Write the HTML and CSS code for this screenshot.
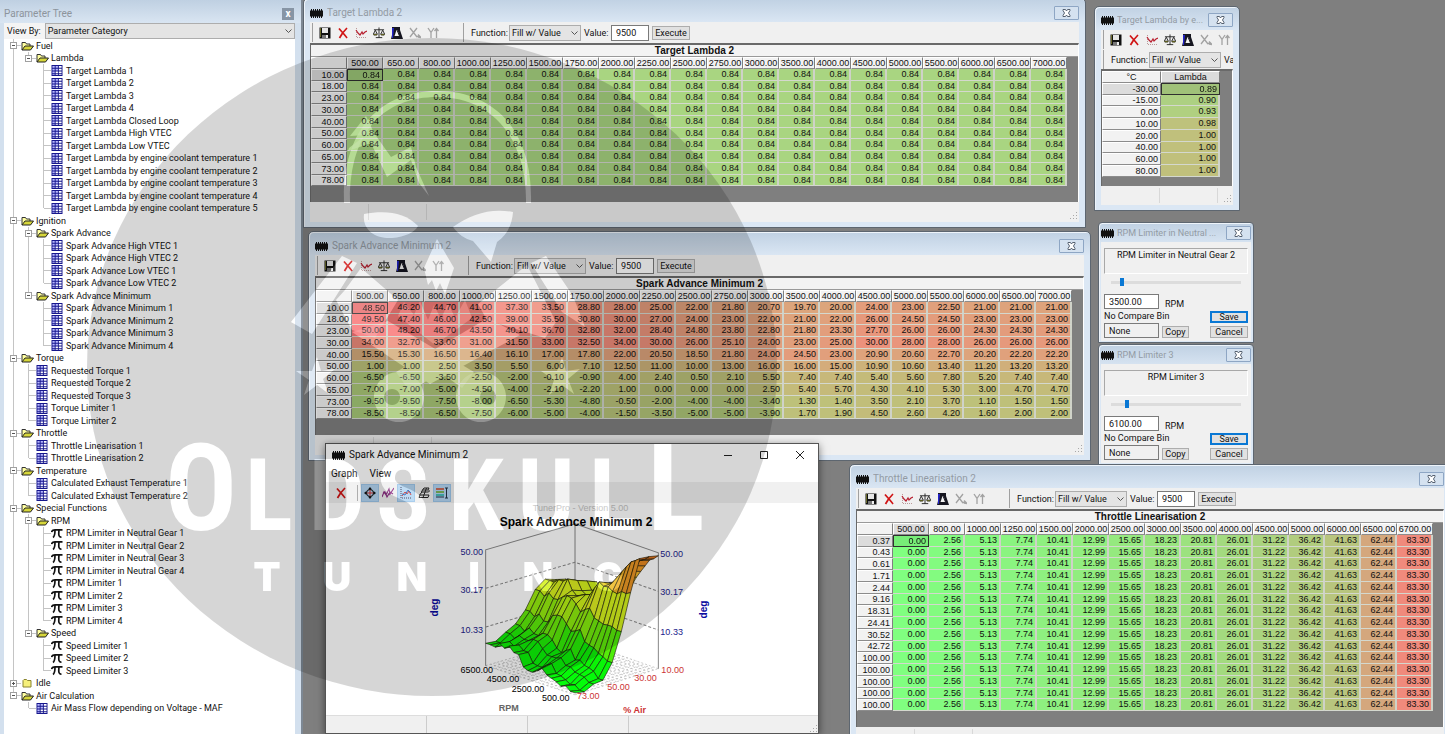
FILE: index.html
```html
<!DOCTYPE html>
<html lang="en">
<head>
<meta charset="utf-8">
<title>TunerPro</title>
<link rel="stylesheet" href="styles.css">
</head>
<body>
<svg class="defs" aria-hidden="true">
  <symbol id="i-chip" viewBox="0 0 13 9"><path d="M1 0h1v9H1zM3 0h1v9H3zM5 0h1v9H5zM7 0h1v9H7zM9 0h1v9H9zM11 0h1v9h-1z" fill="#111"/><path d="M0 1.500h13v6H0z" fill="#111"/></symbol>
  <symbol id="i-close" viewBox="0 0 9 8"><path d="M1 .500h2.500l1 1.500 1-1.500H8v1L6.500 4 8 6.500v1H5.500l-1-1.500-1 1.500H1v-1L2.500 4 1 1.500z" fill="#fff" stroke="#566170"/></symbol>
  <symbol id="i-save" viewBox="0 0 12 12"><path d="M.500.500h11v11h-11z" fill="#111"/><path d="M3 1h6v5H3z" fill="#e6e6e6"/><path d="M3 8h6v3H3z" fill="#777"/><path d="M7 8h2v3H7z" fill="#eee"/><path d="M1 1h1v9H1z" fill="#6b6b2a"/></symbol>
  <symbol id="i-x" viewBox="0 0 12 12"><path d="M2 1.500C4 4 8 8 10 11M10 1C7 4 4 8 2.500 11" stroke="#d01414" stroke-width="1.700" fill="none"/></symbol>
  <symbol id="i-plot" viewBox="0 0 12 12"><path d="M1.500 1v9.500H12" fill="none" stroke="#b99" stroke-dasharray="1 1"/><path d="M1 3l2 3 2 2 2-3 1 2 2-2 2-1" fill="none" stroke="#b82030" stroke-width="1.200"/></symbol>
  <symbol id="i-scale" viewBox="0 0 13 12"><path d="M6.500 0v11M3 11h7M1 2.500h11M2.500 3L.500 7M2.500 3l2 4M10.500 3l-2 4M10.500 3l2 4" stroke="#222" fill="none"/><path d="M0 7h5L4 8.500H1zM8 7h5l-1 1.500H9z" fill="#7a7a22" stroke="#222" stroke-width=".500"/></symbol>
  <symbol id="i-metro" viewBox="0 0 12 12"><path d="M1 0h8v3l3 9H0l1-4z" fill="#15151f"/><path d="M1 1h2L2 11H1z" fill="#2222c8"/><path d="M5.500 3h1l2 6H3.500z" fill="#f2f2f2"/><path d="M6 3l2.500 6" stroke="#15151f"/></symbol>
  <symbol id="i-xa" viewBox="0 0 12 12"><path d="M1 1l7 9M8 1L1 10M7 9.500h4M9 7.500l3 3-3-.500" stroke="#a2a2a2" stroke-width="1.300" fill="none"/></symbol>
  <symbol id="i-ya" viewBox="0 0 12 12"><path d="M1 1l3 4.500V11M7 1L4 5.500M9.500 11V2M7.500 4l2-2.500 2 2.500" stroke="#a2a2a2" stroke-width="1.300" fill="none"/></symbol>
  <symbol id="i-chev" viewBox="0 0 7 4"><path d="M.500.500l3 3 3-3" fill="none" stroke="#555"/></symbol>
  <symbol id="i-open" viewBox="0 0 13 10"><path d="M1 9V1.500h3.500l1 1.500H9v2" fill="#ffffa0" stroke="#333"/><path d="M1 9l3-4h8.500L9.500 9z" fill="#d6d63a" stroke="#222"/></symbol>
  <symbol id="i-shut" viewBox="0 0 13 10"><path d="M2 9V2.500l1-1h2.500l1 1H10V9z" fill="#f6f07a" stroke="#8a8430"/></symbol>
  <symbol id="i-grid" viewBox="0 0 12 12"><path d="M0 0h12v12H0z" fill="#16168c"/><path d="M1 1h2.500v2H1zM4.500 1H7v2H4.500zM1 4h2.500v2H1zM4.500 4H7v2H4.500zM1 7h2.500v2H1zM1 10h2.500v1H1z" fill="#b8b8ff"/><path d="M8 1h3v2H8zM8 4h3v2H8zM4.500 7H7v2H4.500zM8 7h3v2H8zM4.500 10H7v1H4.500zM8 10h3v1H8z" fill="#fff"/></symbol>
  <symbol id="i-pi" viewBox="0 0 12 10"><path d="M.500 3.500C1 1.500 2 1.300 4 1.300h7.500M4 1.500C4 5 3.500 8 2 9M8 1.500C7.500 6 7.500 9 10.500 8.500" fill="none" stroke="#111" stroke-width="1.700"/></symbol>
  <symbol id="i-grip" viewBox="0 0 8 8"><path d="M6 0h1v1H6zM6 3h1v1H6zM3 3h1v1H3zM0 6h1v1H0zM3 6h1v1H3zM6 6h1v1H6z" fill="#a8a8a8"/></symbol>
  <symbol id="i-cross" viewBox="0 0 12 12"><path d="M6 0l2 2.500H4zM6 12l2-2.500H4zM0 6l2.500-2v4zM12 6L9.500 4v4z" fill="#111"/><circle cx="6" cy="6" r="3.500" fill="none" stroke="#111"/><path d="M6 3v6M3 6h6" stroke="#c33"/></symbol>
  <symbol id="i-wave" viewBox="0 0 12 12"><path d="M0 10l2-5 2 3 3-6 1 5 4-6M1 6l2-1 2 5 3-5 3 2" fill="none" stroke="#8a2a80" stroke-width="1.100"/></symbol>
  <symbol id="i-trace" viewBox="0 0 12 12"><path d="M1 0v11h11" fill="none" stroke="#335" stroke-dasharray="1 1"/><path d="M2 9l3-4 2 2 2-3 2 4" fill="none" stroke="#c33"/><path d="M2 7l3 1 3-5 3 3" fill="none" stroke="#26b"/></symbol>
  <symbol id="i-mesh" viewBox="0 0 12 12"><path d="M6 1h5L10 3H4.500zM3.500 5h7M1.500 8L4 5M1 10.500h9L11 8H2zM8.500 1L5 10.500M4.500 3L3.500 5M11 3v2" fill="none" stroke="#222"/></symbol>
  <symbol id="i-bands" viewBox="0 0 12 12"><path d="M0 1h8v2H0z" fill="#c86a5a"/><path d="M0 4h8v2H0z" fill="#7cb45a"/><path d="M0 7h8v2H0z" fill="#4bb"/><path d="M0 10h8M10.500 1v10M9 1h3M9 11h3" stroke="#234" fill="none"/></symbol>
</svg>

<aside class="panel">
  <header class="panel-title"><h2>Parameter Tree</h2><button class="panel-x" aria-label="Close panel">x</button></header>
  <div class="panel-body">
    <div class="viewby"><label for="view">View By:</label>
      <span class="pick pick-wide"><select id="view"><option>Parameter Category</option></select><svg><use href="#i-chev"/></svg></span></div>
    <ul class="tree" id="tree"></ul>
  </div>
</aside>

<main class="desktop">
  <section class="win w-lambda" data-title="Target Lambda 2" data-grid="lambda"></section>
  <section class="win w-spark" data-title="Spark Advance Minimum 2" data-grid="spark"></section>
  <section class="win w-coolant" data-title="Target Lambda by e..." data-grid="coolant"></section>
  <section class="win w-throttle" data-title="Throttle Linearisation 2" data-grid="throttle"></section>
  <section class="win w-rpm2" data-title="RPM Limiter in Neutral ..." data-limit="RPM Limiter in Neutral Gear 2" data-value="3500.00" data-pos="9"></section>
  <section class="win w-rpm3" data-title="RPM Limiter 3" data-limit="RPM Limiter 3" data-value="6100.00" data-pos="13"></section>

  <section class="graph">
    <header class="graph-title"><svg class="chip"><use href="#i-chip"/></svg><h2>Spark Advance Minimum 2</h2>
      <button aria-label="Minimize"><svg viewBox="0 0 10 10"><path d="M1 5.500h8" stroke="#222"/></svg></button>
      <button aria-label="Maximize"><svg viewBox="0 0 10 10"><path d="M1.500 1.500h7v7h-7z" fill="none" stroke="#222"/></svg></button>
      <button aria-label="Close"><svg viewBox="0 0 10 10"><path d="M1 1l8 8M9 1L1 9" fill="none" stroke="#222"/></svg></button>
    </header>
    <nav class="menu"><button>Graph</button><button>View</button></nav>
    <div class="graph-tools">
      <button aria-label="Close graph"><svg><use href="#i-x"/></svg></button><i></i>
      <button class="on" aria-label="Crosshair"><svg><use href="#i-cross"/></svg></button>
      <button aria-label="Wave"><svg><use href="#i-wave"/></svg></button>
      <button class="on" aria-label="Trace"><svg><use href="#i-trace"/></svg></button>
      <button aria-label="Mesh"><svg><use href="#i-mesh"/></svg></button>
      <button class="on" aria-label="Color bands"><svg><use href="#i-bands"/></svg></button>
    </div>
    <svg class="plot" id="plot" viewBox="0 0 490 211" role="img" aria-label="Spark advance surface"></svg>
    <footer class="graph-status"><span></span><span></span><span></span><span></span><svg class="grip"><use href="#i-grip"/></svg></footer>
  </section>
</main>

<svg class="emblem" viewBox="0 0 780 734" aria-hidden="true">
  <defs>
    <g id="art">
      <path d="M344 203C342 130 380 91 437 91S533 130 531 203H526C527 138 492 97 437 97C385 97 349 130 350 203Z"/>
      <path d="M350 136L366 116L374 133L391 157L411 147L416 167L429 196L419 183L411 160L387 177L371 143L348 151L349 148L366 135Z"/>
      <path d="M364 214C362 232 378 239 392 238C405 237 415 232 418 226C405 212 385 210 364 214Z"/>
      <path d="M513 212C490 208 472 214 453 227C458 234 465 239 473 241L491 262L497 242C506 236 512 226 513 212Z"/>
      <path d="M437 239L424 268L428 285L432 280L436 291L440 283L445 294L454 268Z"/>
      <path d="M342 256L357 263L312 334L291 322ZM361 268L398 300L375 338L352 330L336 300L345 290Z"/>
      <path d="M546 256L531 263L562 312L585 327L573 296ZM527 265L478 304L487 320L545 338L556 322Z"/>
      <path d="M352 332L388 321L474 372L462 388L440 372L410 392L396 372L488 318L520 335L430 384Z"/>
      <path d="M404 302L414 315L420 301L428 320L434 305L441 319L448 303L455 318L465 300L472 318L435 345L398 316Z" opacity=".6"/>
      <path fill-rule="evenodd" d="M399 372A25 25 0 1 1 398.900 372ZM392 389A8 8 0 1 0 392.100 389ZM481 372A25 25 0 1 1 480.900 372ZM488 389A8 8 0 1 0 488.100 389Z"/>
      <path d="M317 357L321 371L335 369L323 379L329 394L317 385L304 395L309 380L296 371L312 371ZM562 357L566 371L580 369L568 379L574 394L562 385L549 395L554 380L541 371L557 371Z"/>
      <g class="brand"><text x="201" y="530" class="tall">O</text><text y="530" x="269">L</text><text y="530" x="337">D</text><text y="530" x="403">S</text><text y="530" x="476">K</text><text y="530" x="546">U</text><text y="530" x="613">L</text><text x="676" y="530" class="tall">L</text></g>
      <g class="sub"><text y="591" x="267">T</text><text y="591" x="337">U</text><text y="591" x="412">N</text><text y="591" x="474">I</text><text y="591" x="538">N</text><text y="591" x="608">G</text></g>
    </g>
    <mask id="cut" maskUnits="userSpaceOnUse" x="0" y="0" width="780" height="734"><rect width="780" height="734" fill="#fff"/><use href="#art" fill="#000"/></mask>
  </defs>
  <ellipse cx="432" cy="367" rx="345" ry="329" fill="#000" fill-opacity=".16" mask="url(#cut)"/>
  <use href="#art" fill="#fff" fill-opacity=".15"/>
</svg>
<script src="app.js"></script>
</body>
</html>
```
FILE: styles.css
```css
* { box-sizing: border-box; }
body { margin: 0; height: 100vh; overflow: hidden; display: flex; position: relative; background: #7f7f7f; color: #111; font: 9px/12px Roboto, "Liberation Sans", sans-serif; }
h2, ul, dl { margin: 0; padding: 0; font: inherit; }
button, input, select { font: inherit; color: inherit; margin: 0; padding: 0; border-radius: 0; }
.defs { position: absolute; width: 0; height: 0; }

/* parameter tree */
.panel { width: 303px; flex: none; padding: 0 6px 0 4px; background: #d3e0ee; border-right: 2px solid #7d8894; display: flex; flex-direction: column; }
.panel-title { height: 23px; flex: none; margin: 0 -6px 0 -4px; padding: 4px 7px 0 4px; display: flex; justify-content: space-between; align-items: center; color: #8d949c; font-size: 10px; background: linear-gradient(#bfd0e2, #d9e5f2); }
.panel-x { width: 12px; height: 12px; border: 0; background: #8795a5; color: #fff; line-height: 10px; font-weight: bold; }
.panel-body { flex: 1; background: #fff; }
.viewby { display: flex; align-items: center; gap: 4px; height: 16px; padding-left: 3px; background: #f4f4f4; }
.pick { position: relative; display: inline-flex; width: 72px; height: 16px; }
.pick-wide { flex: 1; width: auto; }
.pick select { width: 100%; appearance: none; border: 1px solid #adadad; background: #e4e4e4; padding-left: 2px; line-height: 12px; }
.pick svg { position: absolute; right: 3px; top: 6px; width: 7px; height: 4px; }
.tree { list-style: none; padding-left: 2px; }
.tree li { display: flex; align-items: center; height: 13px; white-space: pre; }
.tree li:nth-child(even) { height: 12px; }
.tree i { width: 15px; height: 100%; position: relative; flex: none; }
.tree .line::before, .tree .tee::before, .tree .end::before { content: ""; position: absolute; left: 7px; top: 0; bottom: 0; border-left: 1px solid #c4c4c4; }
.tree .end::before { bottom: 6px; }
.tree .tee::after, .tree .end::after { content: ""; position: absolute; left: 8px; right: 0; top: 6px; border-top: 1px solid #c4c4c4; }
.tree .box { position: absolute; z-index: 1; left: 4px; top: 3px; width: 7px; height: 7px; border: 1px solid #a0a0a0; background: linear-gradient(#555, #555) center / 3px 1px no-repeat #fff; }
.tree .plus { background: linear-gradient(#555, #555) center / 3px 1px no-repeat, linear-gradient(#555, #555) center / 1px 3px no-repeat #fff; }
.tree svg { width: 12px; height: 11px; margin-right: 3px; flex: none; }
.tree .dir svg { width: 13px; height: 10px; margin-right: 2px; }

/* windows */
.desktop { flex: 1; min-width: 0; }
.win { position: absolute; background: linear-gradient(#c0d1e3, #dbe7f4 24px); border: 1px solid #5d6670; border-radius: 5px 5px 0 0; padding: 0 6px 5px; box-shadow: inset 1px 1px #eef4fa; }
.w-lambda { left: 303px; top: -2px; width: 783px; }
.w-spark { left: 308px; top: 231px; width: 783px; }
.w-coolant { left: 1094px; top: 6px; width: 146px; }
.w-throttle { left: 849px; top: 464px; width: 602px; }
.w-rpm2 { left: 1098px; top: 222px; width: 156px; }
.w-rpm3 { left: 1098px; top: 344px; width: 156px; }
.bar { display: flex; align-items: center; gap: 4px; height: 23px; padding-top: 5px; color: #939ba4; font-size: 10px; white-space: nowrap; }
.bar h2 { flex: 1; overflow: hidden; }
.chip { width: 13px; height: 9px; flex: none; }
.shut { width: 25px; height: 14px; border: 1px solid #8ea6c4; border-radius: 1px; background: #d5e2f0; display: flex; align-items: center; justify-content: center; flex: none; }
.shut svg { width: 9px; height: 8px; }
.client { background: #f0f0f0; }
.tools { display: flex; height: 21px; align-items: center; padding-left: 2px; overflow: hidden; }
.group { display: flex; align-items: center; height: 19px; border-left: 1px solid #a0a0a0; flex: none; }
.icons { padding-left: 3px; width: 151px; }
.icons button { width: 18px; height: 18px; border: 0; background: none; display: flex; align-items: center; justify-content: center; }
.icons svg, .graph-tools svg { width: 12px; height: 12px; }
.fn { padding-left: 7px; gap: 3px; white-space: nowrap; }
.fn label { width: 35px; }
.fn .val { width: 24px; }
.fn input { width: 38px; height: 16px; border: 1px solid #7a7a7a; background: #fff; padding-left: 4px; }
.fn button { width: 38px; height: 14px; border: 1px solid #adadad; background: #e1e1e1; line-height: 12px; }
.sheet { background: #7f7f7f; border-top: 2px solid #696969; border-left: 1px solid #696969; border-right: 1px solid #fff; padding-bottom: 16px; font: 9px/10px "Liberation Sans", sans-serif; overflow: hidden; }
.sheet h3 { margin: 0; height: 12px; background: #f3f3f3; border-bottom: 1px solid #999; text-align: center; font: bold 10px/12px "Liberation Sans", sans-serif; }
table { border-collapse: separate; border-spacing: 0; table-layout: fixed; width: 0; }
td, th { width: 36px; height: 12px; padding: 0 2px 0 0; text-align: right; font-weight: normal; line-height: 9px; border-right: 2px solid #cfd2c8; border-bottom: 1px solid #d4d8ce; white-space: nowrap; }
tbody tr:nth-child(4n+2) > * { height: 11px; }
th { background: #f2f2f2; border-right: 1px solid #808080; border-bottom: 1px solid #8c8c8c; border-left: 1px solid #fff; border-top: 1px solid #fff; }
thead th { text-align: center; padding: 0; }
.sel th, .selcol { background: #dcdcdc; }
.cursor { border: 1px solid #333; filter: brightness(.93); }
.status { display: flex; height: 20px; padding: 2px 1px; align-items: flex-end; }
.status span { width: 58px; height: 100%; border-right: 1px solid #d8d8d8; }
.grip { width: 8px; height: 8px; margin-left: auto; }

/* narrow coolant window */
.w-coolant .bar { padding-top: 3px; }
.w-coolant .bar, .w-rpm2 .bar, .w-rpm3 .bar { gap: 3px; font-size: 9px; }
.w-rpm2 .bar, .w-rpm3 .bar { height: 18px; padding: 0; }
.w-coolant .tools { flex-wrap: wrap; height: 39px; align-content: flex-start; }
.w-coolant .icons { width: 100%; }
.w-coolant .group { margin-bottom: 1px; }
.w-coolant h3, .w-coolant .fn input, .w-coolant .fn button { display: none; }
.w-coolant td, .w-coolant th { width: 59px; }
.w-coolant .sheet { padding-bottom: 9px; }
.w-coolant .status { height: 19px; }

/* limiter dialogs */
.w-rpm2, .w-rpm3 { padding: 1px 2px 1px; border-radius: 4px 4px 0 0; }
.limit { display: flex; flex-direction: column; background: #f0f0f0; padding: 6px 3px 3px; }
.limit h3 { margin: 0; height: 26px; font: inherit; text-align: center; border: 1px solid #a8a8a8; border-right-color: #fff; border-bottom-color: #fff; }
.limit input[type=range] { appearance: none; width: 130px; height: 8px; margin: 4px auto 7px; background: linear-gradient(#dcdcdc, #dcdcdc) center / 100% 3px no-repeat; }
.limit input[type=range]::-webkit-slider-thumb { appearance: none; width: 4px; height: 8px; background: #0a78d4; }
.fields { display: grid; grid-template-columns: 55px 1fr 38px; gap: 0 3px; align-items: center; }
.fields input { width: 55px; height: 15px; border: 1px solid #7a7a7a; background: #fff; padding-left: 4px; }
.fields .none { background: #f0f0f0; }
.fields .cmp { grid-column: span 2; height: 13px; }
.fields .unit { grid-column: span 2; padding: 5px 0 0 3px; }
.fields button { width: 27px; height: 12px; border: 1px solid #adadad; background: #e1e1e1; line-height: 10px; align-self: end; }
.fields .wide { width: 38px; }
.fields .save { border: 2px solid #0a78d4; line-height: 8px; align-self: center; }

/* graph window */
.graph { position: absolute; left: 325px; top: 443px; width: 494px; background: #fff; border: 1px solid #555; box-shadow: 0 2px 8px rgba(0, 0, 0, .5); }
.graph-title { display: flex; align-items: center; height: 22px; padding-left: 6px; font-size: 10px; }
.graph-title h2 { flex: 1; padding-left: 4px; }
.graph-title button { width: 36px; height: 20px; border: 0; background: none; }
.graph-title svg:not(.chip) { width: 10px; height: 10px; vertical-align: middle; }
.menu { height: 16px; display: flex; gap: 12px; padding: 1px 5px; font-size: 10px; }
.menu button { border: 0; background: none; }
.graph-tools { display: flex; height: 21px; align-items: center; background: #f0f0f0; padding-left: 6px; }
.graph-tools button { width: 18px; height: 18px; border: 0; background: none; display: flex; align-items: center; justify-content: center; }
.graph-tools .on { background: #b4d6f2; border: 1px solid #9cc6ea; }
.graph-tools i { height: 16px; margin: 0 3px 0 7px; border-left: 1px solid #a0a0a0; }
.plot { display: block; width: 100%; font: 9px "Liberation Sans", sans-serif; }
.plot .title { font-size: 12px; font-weight: bold; }
.plot .ver { fill: #c4c4c4; }
.plot .blue { fill: #22228c; }
.plot .red { fill: #c33; }
.plot .axis { font-weight: bold; }
.plot .axis.blue { font-size: 10px; fill: #0a0aa0; }
.plot .frame { fill: none; stroke: #888; }
.plot .dash { fill: none; stroke: #888; stroke-dasharray: 3 2; }
.plot .floor { stroke: #999; stroke-width: .5; stroke-dasharray: 2 2; }
.plot .face { stroke: #171708; stroke-width: .6; stroke-linejoin: round; }
.graph-status { display: flex; height: 18px; background: #f0f0f0; border-top: 1px solid #ddd; align-items: flex-end; }
.graph-status span { width: 101px; height: 100%; border-right: 1px solid #ccc; }
.graph-status span:nth-child(4) { border: 0; }

.emblem { position: absolute; left: 0; top: 0; width: 780px; height: 734px; pointer-events: none; }
.brand { font: bold 100px "Liberation Sans Narrow", "Roboto Condensed", "Open Sans Condensed", "Liberation Sans", sans-serif; text-anchor: middle; }
.brand .tall { font-size: 120px; }
.sub { font: 900 40px Inter, sans-serif; text-anchor: middle; }
```
FILE: app.js
```js
const use = (id, cls = '') => `<svg class="${cls}"><use href="#i-${id}"/></svg>`;

/* ---- tree ---- */
const groups = [
  [0, 'Fuel'], [1, 'Lambda'],
  ...['1', '2', '3', '4', 'Closed Loop', 'High VTEC', 'Low VTEC'].map(s => [2, 'Target Lambda ' + s, 'grid']),
  ...[1, 2, 3, 4, 5].map(n => [2, 'Target Lambda by engine coolant temperature ' + n, 'grid']),
  [0, 'Ignition'], [1, 'Spark Advance'],
  ...['High VTEC 1', 'High VTEC 2', 'Low VTEC 1', 'Low VTEC 2'].map(s => [2, 'Spark Advance ' + s, 'grid']),
  [1, 'Spark Advance Minimum'],
  ...[1, 2, 3, 4].map(n => [2, 'Spark Advance Minimum ' + n, 'grid']),
  [0, 'Torque'],
  ...['Requested Torque 1', 'Requested Torque 2', 'Requested Torque 3', 'Torque Limiter 1', 'Torque Limiter 2'].map(s => [1, s, 'grid']),
  [0, 'Throttle'], [1, 'Throttle Linearisation 1', 'grid'], [1, 'Throttle Linearisation 2', 'grid'],
  [0, 'Temperature'], [1, 'Calculated Exhaust Temperature 1', 'grid'], [1, 'Calculated Exhaust Temperature 2', 'grid'],
  [0, 'Special Functions'], [1, 'RPM'],
  ...[1, 2, 3, 4].map(n => [2, 'RPM Limiter in Neutral Gear ' + n, 'pi']),
  ...[1, 2, 3, 4].map(n => [2, 'RPM Limiter ' + n, 'pi']),
  [1, 'Speed'], ...[1, 2, 3].map(n => [2, 'Speed Limiter ' + n, 'pi']),
  [0, 'Idle', 'shut'], [0, 'Air Calculation'], [1, 'Air Mass Flow depending on Voltage - MAF', 'grid']
];
const hasNext = (i, level) => {
  for (let j = i + 1; j < groups.length; j++) {
    if (groups[j][0] < level) return false;
    if (groups[j][0] === level) return true;
  }
  return false;
};
document.getElementById('tree').innerHTML = groups.map(([depth, text, icon], i) => {
  let cells = '';
  for (let k = 0; k < depth; k++) cells += `<i class="${hasNext(i, k) ? 'line' : ''}"></i>`;
  const dir = !icon || icon === 'shut';
  const box = dir ? `<b class="box ${icon ? 'plus' : ''}"></b>` : '';
  cells += `<i class="${hasNext(i, depth) ? 'tee' : 'end'}">${box}</i>`;
  return `<li class="${dir ? 'dir' : ''}">${cells}${use(icon || 'open')}<span>${text}</span></li>`;
}).join('');

/* ---- tables ---- */
const rpm = [500, 650, 800, 1000, 1250, 1500, 1750, 2000, 2250, 2500, 2750, 3000, 3500, 4000, 4500, 5000, 5500, 6000, 6500, 7000];
const load = [10, 18, 23, 30, 40, 50, 60, 65, 73, 78];
const spark = [
  [48.5, 46.2, 44.7, 41, 37.3, 33.5, 28.8, 28, 25, 22, 21.8, 20.7, 19.7, 20, 24, 23, 22.5, 21, 21, 21],
  [49.5, 47.4, 46, 42.5, 39, 35.5, 30.8, 30, 27, 24, 23, 22, 21, 22, 26, 24.5, 24.5, 23, 23, 23],
  [50, 48.2, 46.7, 43.5, 40.1, 36.7, 32.8, 32, 28.4, 24.8, 23.8, 22.8, 21.8, 23.3, 27.7, 26, 26, 24.3, 24.3, 24.3],
  [34, 32.7, 33, 31, 31.5, 33, 32.5, 34, 30, 26, 25.1, 24, 23, 25, 30, 28, 28, 26, 26, 26],
  [15.5, 15.3, 16.5, 16.4, 16.1, 17, 17.8, 22, 20.5, 18.5, 21.8, 24, 24.5, 23, 20.9, 20.6, 22.7, 20.2, 22.2, 22.2],
  [1, 1, 2.5, 3.5, 5.5, 6, 7.1, 12.5, 11, 10, 13, 16, 16, 15, 10.9, 10.6, 13.4, 11.2, 13.2, 13.2],
  [-6.5, -6.5, -3.5, -2.5, -2, -0.1, -0.9, 4, 2.4, 0.5, 2.1, 5.5, 7.4, 7.4, 5.4, 5.6, 7.8, 5.2, 7.4, 7.4],
  [-7, -7, -5, -4.5, -4, -2.1, -2.2, 1, 0, 0, 0, 2.5, 5.4, 5.7, 4.3, 4.1, 5.3, 3, 4.7, 4.7],
  [-9.5, -9.5, -7.5, -8, -6.5, -5.3, -4.8, -0.5, -2, -4, -4, -3.4, 1.3, 1.4, 3.5, 2.1, 3.7, 1.1, 1.5, 1.5],
  [-8.5, -8.5, -6.5, -7.5, -6, -5, -4, -1.5, -3.5, -5, -5, -3.9, 1.7, 1.9, 4.5, 2.6, 4.2, 1.6, 2, 2]
];
const flow = [0, 2.56, 5.13, 7.74, 10.41, 12.99, 15.65, 18.23, 20.81, 26.01, 31.22, 36.42, 41.63, 62.44, 83.3];
const angle = [0.37, 0.43, 0.61, 1.71, 2.44, 9.16, 18.31, 24.41, 30.52, 42.72, 100, 100, 100, 100, 100];
const ramp = stops => v => {
  let i = 1;
  while (i < stops.length - 1 && v > stops[i][0]) i++;
  const [a, b] = [stops[i - 1], stops[i]];
  const t = Math.min(1, Math.max(0, (v - a[0]) / (b[0] - a[0])));
  return `rgb(${[1, 2, 3].map(k => Math.round(a[k] + (b[k] - a[k]) * t)).join(',')})`;
};
const grids = {
  lambda: { cols: rpm, rows: load, data: load.map(() => rpm.map(() => 0.84)), color: () => '#a9d581' },
  spark: { cols: rpm, rows: load, data: spark, color: ramp([[-9.5, 165, 202, 120], [2, 191, 192, 122], [13, 208, 175, 122], [21, 222, 163, 124], [30, 236, 145, 124], [50, 250, 118, 120]]) },
  throttle: { cols: [500, 800, 1000, 1250, 1500, 2000, 2500, 3000, 3500, 4000, 4500, 5000, 6000, 6500, 6700], rows: angle, data: angle.map(() => flow), color: ramp([[0, 128, 255, 128], [83.3, 240, 138, 124]]) },
  coolant: { corner: '°C', cols: ['Lambda'], rows: [-30, -15, 0, 10, 20, 40, 60, 80], data: [0.89, 0.9, 0.93, 0.98, 1, 1, 1, 1].map(v => [v]), color: ramp([[0.89, 172, 208, 130], [0.93, 176, 208, 128], [0.98, 190, 194, 124], [1, 192, 192, 124]]) }
};
const table = g => `<table><thead><tr><th>${g.corner || ''}</th>${g.cols.map((c, i) => `<th class="${i ? '' : 'selcol'}">${c.toFixed ? c.toFixed(2) : c}</th>`).join('')}</tr></thead><tbody>${
  g.rows.map((r, y) => `<tr class="${y ? '' : 'sel'}"><th>${r.toFixed(2)}</th>${g.data[y].map((v, x) =>
    `<td class="${x || y ? '' : 'cursor'}" style="background:${g.color(v)}">${v.toFixed(2)}</td>`).join('')}</tr>`).join('')}</tbody></table>`;
const tools = id => `<div class="tools"><div class="group icons">${
  [['save', 'Save'], ['x', 'Close'], ['plot', 'Plot'], ['scale', 'Compare'], ['metro', 'Trace'], ['xa', 'X axis'], ['ya', 'Y axis']]
    .map(([n, l]) => `<button aria-label="${l}">${use(n)}</button>`).join('')}</div>
  <div class="group fn"><label for="f-${id}">Function:</label><span class="pick"><select id="f-${id}"><option>Fill w/ Value</option></select>${use('chev')}</span>
  <label class="val" for="v-${id}">Value:</label><input id="v-${id}" value="9500"><button>Execute</button></div></div>`;
document.querySelectorAll('.win').forEach((w, n) => {
  const d = w.dataset;
  const bar = `<header class="bar">${use('chip', 'chip')}<h2>${d.title}</h2><button class="shut" aria-label="Close">${use('close')}</button></header>`;
  w.innerHTML = bar + (d.grid
    ? `<div class="client">${tools(n)}<div class="sheet"><h3>${d.title}</h3>${table(grids[d.grid])}</div><footer class="status"><span></span><span></span>${use('grip', 'grip')}</footer></div>`
    : `<div class="limit"><h3>${d.limit}</h3><input type="range" aria-label="${d.limit}" value="${d.pos - 2}">
       <div class="fields"><input id="n-${n}" value="${d.value}"><label class="unit" for="n-${n}">RPM</label>
       <label class="cmp" for="c-${n}">No Compare Bin</label><button class="wide save">Save</button>
       <input id="c-${n}" class="none" value="None" readonly><button>Copy</button><button class="wide">Cancel</button></div></div>`);
});

/* ---- surface plot ---- */
const corner = { front: [248, 191], left: [159, 162], right: [331, 165], back: [248, 136] };
const unit = 1.94;
const point = (u, v, z) => [0, 1].map(k =>
  corner.front[k] * (1 - u) * (1 - v) + corner.left[k] * u * (1 - v) + corner.right[k] * (1 - u) * v + corner.back[k] * u * v
  - (k ? (z + 9.5) * unit : 0)).map(n => n.toFixed(1)).join(',');
const heat = ramp([[-9.5, 0, 255, 10], [4, 15, 240, 5], [9, 90, 235, 10], [17, 150, 236, 15], [22, 205, 245, 25], [30, 235, 235, 40], [38, 240, 165, 40], [50, 220, 105, 25]]);
const line = (cls, ...p) => `<polyline class="${cls}" points="${p.join(' ')}"/>`;
let out = '';
for (let i = 0; i <= 19; i++) out += line('floor', point(i / 19, 0, -9.5), point(i / 19, 1, -9.5));
for (let i = 0; i <= 18; i++) out += line('floor', point(0, i / 18, -9.5), point(1, i / 18, -9.5));
out += line('frame', point(1, 0, -9.5), point(1, 0, 50), point(1, 1, 50), point(0, 1, 50), point(0, 1, -9.5));
out += line('frame', point(1, 1, 50), point(1, 1, -9.5));
[10.33, 30.17].forEach(z => { out += line('dash', point(1, 0, z), point(1, 1, z), point(0, 1, z)); });
for (let x = 18; x >= 0; x--) for (let y = 0; y < 9; y++) {
  const p = (a, b) => point(a / 19, (9 - b) / 9, spark[b][a]);
  const mean = (spark[y][x] + spark[y + 1][x] + spark[y][x + 1] + spark[y + 1][x + 1]) / 4;
  out += `<polygon class="face" fill="${heat(mean)}" points="${p(x, y)} ${p(x + 1, y)} ${p(x + 1, y + 1)} ${p(x, y + 1)}"/>`;
}
const text = (x, y, s, cls = '', more = '') => `<text x="${x}" y="${y}" class="${cls}" ${more}>${s}</text>`;
out += text(206, 8, 'TunerPro - Version 5.00', 'ver') + text(173, 23, 'Spark Advance Minimum 2', 'title');
[['50.00', 52], ['30.17', 90], ['10.33', 129]].forEach(([s, y]) => { out += text(134, y, s, 'blue') + text(333, y + 2, s, 'blue'); });
out += [[134, 169, '6500.00'], [160, 178, '4500.00'], [185, 188, '2500.00'], [215, 197, '500.00']].map(a => text(...a)).join('');
out += [[334, 169, '10.00'], [307, 177, '30.00'], [280, 186, '50.00'], [250, 195, '73.00']].map(a => text(...a, 'red')).join('');
out += text(172, 207, 'RPM', 'axis', 'fill="#666"') + text(296, 209, '% Air', 'axis red');
out += text(0, 0, 'deg', 'axis blue', 'transform="translate(112 113) rotate(-90)"') + text(0, 0, 'deg', 'axis blue', 'transform="translate(379 115) rotate(-90)"');
document.getElementById('plot').innerHTML = out;
```
